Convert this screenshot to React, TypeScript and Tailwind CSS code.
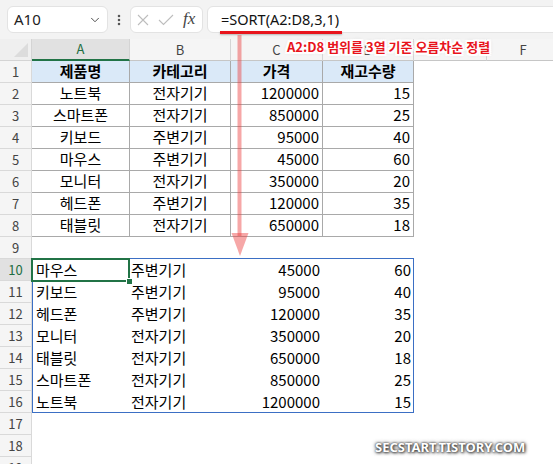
import { ChevronDown, EllipsisVertical } from "lucide-react";

const products = [
    ["노트북", "전자기기", "1200000", "15"],
    ["스마트폰", "전자기기", "850000", "25"],
    ["키보드", "주변기기", "95000", "40"],
    ["마우스", "주변기기", "45000", "60"],
    ["모니터", "전자기기", "350000", "20"],
    ["헤드폰", "주변기기", "120000", "35"],
    ["태블릿", "전자기기", "650000", "18"],
];

const sorted = [...products].sort((a, b) => Number(a[2]) - Number(b[2]));

// column widths A..F
const colW = ["w-[98px]", "w-[101px]", "w-[92px]", "w-[91px]", "w-[73px]", "w-[73px]"];
const letters = ["A", "B", "C", "D", "E", "F"];

const rowHeaders = Array.from({ length: 19 }, (_, i) => i + 1);

const App = () => {
    return (
        <div className="relative w-[553px] h-[464px] overflow-hidden bg-white text-black font-['Noto_Sans_CJK_KR',sans-serif]">
            {/* Formula bar */}
            <div className="h-[39px] bg-[#f3f3f3] flex items-center pl-[7px]">
                <div className="w-[101px] h-[27px] shrink-0 bg-white border border-[#e3e3e3] rounded-md flex items-center justify-between pl-[6px] pr-[5px]">
                    <span className="text-[15px] leading-none font-['Noto_Sans',sans-serif] text-[#222]">A10</span>
                    <ChevronDown size={14} strokeWidth={1.6} className="text-[#444]" />
                </div>
                <div className="w-[22px] shrink-0 flex justify-center">
                    <EllipsisVertical size={14} strokeWidth={2.4} className="text-[#555]" />
                </div>
                <div className="w-[73px] h-[27px] shrink-0 bg-white border border-[#e3e3e3] rounded-md flex items-center pl-[6px] gap-[9px]">
                    <svg width="12" height="12" viewBox="0 0 12 12" className="shrink-0">
                        <path d="M1 1 L11 11 M11 1 L1 11" stroke="#bdbdbd" strokeWidth="1.1" fill="none" />
                    </svg>
                    <svg width="16" height="12" viewBox="0 0 16 12" className="shrink-0">
                        <path d="M1 6 L5.5 10.5 L15 1" stroke="#bdbdbd" strokeWidth="1.1" fill="none" />
                    </svg>
                    <span className="text-[17px] leading-none italic font-['Liberation_Serif',serif] text-[#444] -mt-[2px]">fx</span>
                </div>
                <div className="ml-[4px] w-[360px] h-[27px] shrink-0 bg-white border border-[#e3e3e3] rounded-l-md flex items-center pl-[13px]">
                    <span className="text-[14.5px] leading-none font-['Noto_Sans',sans-serif] text-[#111]">=SORT(A2:D8,3,1)</span>
                </div>
            </div>

            {/* Column headers */}
            <div className="flex h-[22px] bg-[#f5f5f5]">
                <div className="w-[32px] shrink-0 border-r border-b border-[#d4d4d4] bg-[#efefef] relative overflow-hidden">
                    <div className="absolute right-[3px] bottom-[3px] w-0 h-0 border-l-[14px] border-l-transparent border-b-[14px] border-b-[#dcdcdc]" />
                </div>
                {letters.map((l, i) => (
                    <div
                        key={l}
                        className={`${colW[i]} shrink-0 flex items-center justify-center text-[13px] border-r border-[#d4d4d4] ${
                            i === 0 ? "bg-[#e1e1e1] text-[#1e6e42] border-b-2 border-b-[#217346]" : "text-[#444] border-b border-b-[#c6c6c6]"
                        }`}
                    >
                        {l}
                    </div>
                ))}
            </div>

            {/* Sheet body */}
            <div className="flex">
                <div className="w-[32px] shrink-0 flex flex-col">
                    {rowHeaders.map((n) => (
                        <div
                            key={n}
                            className={`h-[22px] flex items-center justify-center text-[13px] border-b border-r border-[#d9d9d9] ${
                                n === 10 ? "bg-[#e1e1e1] text-[#1e6e42]" : "bg-[#f5f5f5] text-[#444]"
                            }`}
                        >
                            {n}
                        </div>
                    ))}
                </div>

                <div className="flex flex-col text-[15px]">
                    {/* Source table A1:D8 */}
                    <div className="flex h-[22px] bg-[#dae9f8] font-bold">
                        {["제품명", "카테고리", "가격", "재고수량"].map((h, i) => (
                            <div key={h} className={`${colW[i]} shrink-0 flex items-center justify-center border-r border-b border-[#a9a9a9]`}>
                                {h}
                            </div>
                        ))}
                    </div>
                    {products.map((r) => (
                        <div key={r[0]} className="flex h-[22px]">
                            <div className={`${colW[0]} shrink-0 flex items-center justify-center border-r border-b border-[#a9a9a9]`}>{r[0]}</div>
                            <div className={`${colW[1]} shrink-0 flex items-center justify-center border-r border-b border-[#a9a9a9]`}>{r[1]}</div>
                            <div className={`${colW[2]} shrink-0 flex items-center justify-end pr-[3px] border-r border-b border-[#a9a9a9]`}>{r[2]}</div>
                            <div className={`${colW[3]} shrink-0 flex items-center justify-end pr-[3px] border-r border-b border-[#a9a9a9]`}>{r[3]}</div>
                        </div>
                    ))}

                    {/* Row 9 */}
                    <div className="h-[22px]" />

                    {/* Spill result A10:D16 */}
                    <div className="relative w-[382px]">
                        {sorted.map((r) => (
                            <div key={r[0]} className="flex h-[22px]">
                                <div className={`${colW[0]} shrink-0 flex items-center pl-[4px]`}>{r[0]}</div>
                                <div className={`${colW[1]} shrink-0 flex items-center pl-[1px]`}>{r[1]}</div>
                                <div className={`${colW[2]} shrink-0 flex items-center justify-end pr-[3px]`}>{r[2]}</div>
                                <div className={`${colW[3]} shrink-0 flex items-center justify-end pr-[3px]`}>{r[3]}</div>
                            </div>
                        ))}
                        <div className="absolute inset-0 -top-px border border-[#3b6fc4] pointer-events-none" />
                        {/* active cell A10 */}
                        <div className="absolute -left-[1px] -top-[1px] w-[99px] h-[24px] border-2 border-[#217346]" />
                        <div className="absolute left-[94px] top-[19px] w-[7px] h-[7px] bg-[#217346] border border-white" />
                    </div>
                </div>
            </div>

            {/* Annotation: underline, arrow, note */}
            <div className="absolute left-[220px] top-[31px] w-[122px] h-[3px] bg-[#e8141c] shadow-[0_1px_2px_rgba(0,0,0,0.25)]" />
            <svg className="absolute left-0 top-0 pointer-events-none" width="553" height="464">
                <line x1="239.5" y1="35" x2="239.5" y2="236" stroke="rgba(235,60,60,0.45)" strokeWidth="4" />
                <polygon points="231.5,233 248.5,233 240,256" fill="rgba(235,60,60,0.45)" />
            </svg>
            <div className="absolute left-[287px] top-[38px] text-[13px] leading-[18px] font-bold text-[#e8141c] [text-shadow:2px_0_0_#fff,-2px_0_0_#fff,0_2px_0_#fff,0_-2px_0_#fff,1px_1px_0_#fff,-1px_-1px_0_#fff,1px_-1px_0_#fff,-1px_1px_0_#fff,2px_2px_1px_#fff,-2px_-2px_1px_#fff,2px_-2px_1px_#fff,-2px_2px_1px_#fff,0_0_4px_rgba(0,0,0,0.3)]">
                A2:D8 범위를 3열 기준 오름차순 정렬
            </div>

            {/* Watermark */}
            <div className="absolute left-[375px] top-[438px] text-[13px] leading-[18px] font-bold text-white font-['Noto_Sans',sans-serif] [text-shadow:0_0_2px_#333,1px_1px_3px_#444,0_0_4px_#666]">
                SECSTART.TISTORY.COM
            </div>
        </div>
    );
};

export default App;
